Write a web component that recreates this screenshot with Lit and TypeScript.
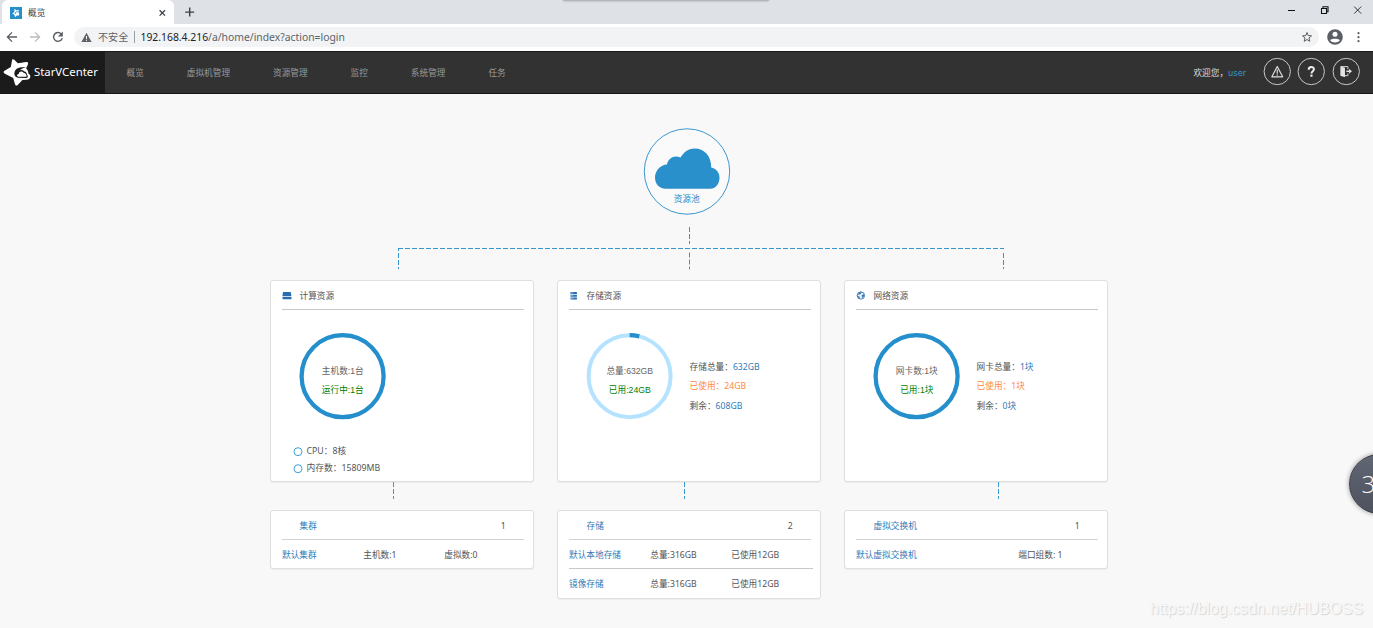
import { LitElement, html, svg, css, nothing } from "lit";
import { customElement, property } from "lit/decorators.js";

const BLUE = "#258fcc";

type Ring = { share: number; top: string; bottom: string };
type Fact = { label: string; value: string; tone?: string };
type Pool = {
  icon: unknown;
  title: string;
  ring: Ring;
  facts: Fact[];
  specs: string[];
  link: number;
  group: string;
  count: string;
  rows: string[][];
};

const hostIcon = svg`<path d="M1 .9h7.800l.6 4.400H.4z" fill="#2a6cae"/><path d="M.5 6.100h9v1.500a.6.6 0 0 1-.6.6H1.100a.6.6 0 0 1-.6-.6z" fill="#2a6cae"/>`;
const storeIcon = svg`<path d="M1.500 1h6.400v2.100H1.500zM1.500 3.700h6.400v2.100H1.500zM1.500 6.400h6.400v2.100H1.500z" fill="#2a6cae"/><path d="M2.300 2h1.200M2.300 4.700h1.200M2.300 7.400h1.200" stroke="#d5e6f6" stroke-width=".8"/><path d="M4.100 1v7.400" stroke="#8fb4da" stroke-width=".5"/>`;
const netIcon = svg`<circle cx="4.900" cy="4.500" r="3.700" fill="#e6eff8" stroke="#2a6cae" stroke-width=".8"/><path d="M1.300 4.800 3.600 6.100 3.400 7.600zM3.100 1.700 5.600 1.300 4.400 2.900 2.400 3.400zM6 4.600 7.300 3.200 8.100 4.800 6.600 6.800z" fill="#2a6cae" stroke="#2a6cae" stroke-width=".4"/>`;

const pools: Pool[] = [
  {
    icon: hostIcon,
    title: "计算资源",
    ring: { share: 1, top: "主机数:1台", bottom: "运行中:1台" },
    facts: [],
    specs: ["CPU：8核", "内存数：15809MB"],
    link: 123,
    group: "集群",
    count: "1",
    rows: [["默认集群", "主机数:1", "虚拟数:0"]],
  },
  {
    icon: storeIcon,
    title: "存储资源",
    ring: { share: 24 / 632, top: "总量:632GB", bottom: "已用:24GB" },
    facts: [
      { label: "存储总量：", value: "632GB" },
      { label: "已使用：", value: "24GB", tone: "warn" },
      { label: "剩余：", value: "608GB" },
    ],
    specs: [],
    link: 127,
    group: "存储",
    count: "2",
    rows: [
      ["默认本地存储", "总量:316GB", "已使用12GB"],
      ["镜像存储", "总量:316GB", "已使用12GB"],
    ],
  },
  {
    icon: netIcon,
    title: "网络资源",
    ring: { share: 1, top: "网卡数:1块", bottom: "已用:1块" },
    facts: [
      { label: "网卡总量：", value: "1块" },
      { label: "已使用：", value: "1块", tone: "warn" },
      { label: "剩余：", value: "0块" },
    ],
    specs: [],
    link: 154,
    group: "虚拟交换机",
    count: "1",
    rows: [["默认虚拟交换机", "", "端口组数: 1"]],
  },
];

@customElement("browser-chrome")
class BrowserChrome extends LitElement {
  static styles = css`
    :host { display: block; font-family: "Noto Sans", "Noto Sans CJK SC", sans-serif; }
    svg { display: block; flex: none; }
    .strip { position: relative; display: flex; height: 24px; background: #dee1e6; box-sizing: border-box; padding-left: 2px; }
    .tab { display: flex; align-items: center; width: 172px; height: 24px; border-radius: 6px 6px 0 0; background: #fff; box-sizing: border-box; padding: 1px 6px 0 8px; }
    .name { flex: 1; margin-left: 6px; font-size: 8.67px; line-height: 12px; color: #3c4043; }
    .plus { margin: 6px 0 0 10px; }
    .space { flex: 1; }
    .win { display: flex; margin-top: 4px; margin-right: 9.500px; gap: 21px; }
    .sheet { position: absolute; left: 563px; top: -6px; width: 206px; height: 7px; border-radius: 2px; background: #b3b5b9; box-shadow: 0 0 2px #8d8f93; }
    .bar { display: flex; align-items: center; height: 27px; background: #fff; box-sizing: border-box; padding: 0 8px 1px 5px; }
    .arrows { display: flex; gap: 9px; width: 69px; }
    .omni { display: flex; align-items: center; flex: 1; height: 20px; border-radius: 10px; background: #f1f3f4; padding: 0 6.500px 0 7px; }
    .unsafe { margin-left: 6px; font-size: 10.1px; line-height: 16px; color: #5f6368; width: 36px; }
    .sep { width: 1px; height: 12px; background: #9aa0a6; margin-right: 5.500px; }
    .url { flex: 1; font-size: 10.370px; line-height: 16px; color: #5f6368; white-space: nowrap; }
    .host { color: #202124; }
    .me { margin: 0 8px; }
  `;
  render() {
    return html`
      <div class="strip">
        <div class="sheet"></div>
        <div class="tab">
          <svg width="12" height="12" viewBox="0 0 12 12"><rect width="12" height="12" fill="#258fcc"/><path d="M4.500 1.800 6.300 3.200 9.200 3 8.200 4.600 9.300 7.200 9 8.500 6.800 8.600 5 10.200 4.500 7.900 2.200 6.300 4.300 5.200z" fill="#fff"/><path d="M7.800 4.700C5.800 4.500 5 5.500 5.200 7" stroke="#258fcc" stroke-width=".9" fill="none"/></svg>
          <div class="name">概览</div>
          <svg width="12" height="12" viewBox="0 0 12 12"><path d="M3.600 3.200l5.400 5.400M9 3.200L3.600 8.600" stroke="#3c4043" stroke-width="1.300"/></svg>
        </div>
        <svg class="plus" width="12" height="12" viewBox="0 0 12 12"><path d="M5.700 1.600v9M1.200 6.100h9" stroke="#3c4043" stroke-width="1.400"/></svg>
        <div class="space"></div>
        <div class="win">
          <svg width="12" height="12" viewBox="0 0 12 12"><path d="M2 6.500h7" stroke="#111"/></svg>
          <svg width="12" height="12" viewBox="0 0 12 12"><path d="M2.500 4.500h5v5h-5zM4 4V2.700h5v5H7.700" fill="none" stroke="#111" stroke-width="1.100"/></svg>
          <svg width="12" height="12" viewBox="0 0 12 12"><path d="M2.200 2.600l7 7M9.200 2.600l-7 7" stroke="#222" stroke-width=".9"/></svg>
        </div>
      </div>
      <div class="bar">
        <div class="arrows">
          <svg width="14" height="14" viewBox="0 0 14 14"><path d="M12 7H2.600M7 2.400 2.400 7 7 11.600" fill="none" stroke="#5a5e63" stroke-width="1.300"/></svg>
          <svg width="14" height="14" viewBox="0 0 14 14"><path d="M2 7h9.400M7 2.400 11.600 7 7 11.600" fill="none" stroke="#babcbe" stroke-width="1.300"/></svg>
          <svg width="14" height="14" viewBox="0 0 14 14"><path d="M11.200 8.200A4.400 4.400 0 1 1 10.200 3.900" fill="none" stroke="#5a5e63" stroke-width="1.400"/><path d="M11.800 1.600v4.900H6.900z" fill="#5a5e63"/></svg>
        </div>
        <div class="omni">
          <svg width="11" height="11" viewBox="0 0 11 11"><path d="M5.500.8 10.600 10H.4z" fill="#5f6368"/><path d="M5.500 4v3M5.500 7.800v1.100" stroke="#f1f3f4" stroke-width="1"/></svg>
          <div class="unsafe">不安全</div>
          <div class="sep"></div>
          <div class="url"><span class="host">192.168.4.216</span>/a/home/index?action=login</div>
          <svg width="12" height="12" viewBox="0 0 12 12"><path d="M6 1.500 7.250 4.600l3.300.25L8 7l.8 3.300L6 8.500l-2.800 1.800L4 7 1.500 4.850l3.300-.25z" fill="none" stroke="#5a5e63" stroke-width="1"/></svg>
        </div>
        <svg class="me" width="16" height="16" viewBox="0 0 16 16"><circle cx="8" cy="8" r="7.800" fill="#5a5e66"/><circle cx="8" cy="5.300" r="2.500" fill="#fff"/><path d="M3.200 11.300c.8-2 8.800-2 9.600 0-2 3-7.600 3-9.600 0z" fill="#fff"/></svg>
        <svg width="14" height="14" viewBox="0 0 14 14"><circle cx="7.500" cy="3.200" r="1.100" fill="#5a5e63"/><circle cx="7.500" cy="7.200" r="1.100" fill="#5a5e63"/><circle cx="7.500" cy="11.200" r="1.100" fill="#5a5e63"/></svg>
      </div>`;
  }
}

@customElement("top-nav")
class TopNav extends LitElement {
  static styles = css`
    :host { display: flex; height: 43px; box-sizing: border-box; background: #323232; border-top: 1px solid #1b1b1b; border-bottom: 1px solid #161616; font: 8.67px/14px "Noto Sans", "Noto Sans CJK SC", sans-serif; color: #999; }
    svg { display: block; flex: none; }
    .brand { display: flex; align-items: center; width: 105px; background: #1b1b1b; box-sizing: border-box; padding-left: 2px; color: #fff; font-size: 11.350px; }
    .word { margin-left: 3px; margin-top: -2px; }
    .menu { display: flex; flex: 1; align-items: center; gap: 42.950px; padding: 0 0 0 21.500px; }
    .hi { display: flex; align-items: center; color: #ddd; }
    .user { font-family: "DejaVu Sans", sans-serif; font-size: 8.300px; color: #3598db; }
    .tools { display: flex; align-items: center; gap: 6px; padding: 0 13px 2px 16.300px; }
  `;
  render() {
    const round = (body: unknown) => html`<svg width="28.500" height="29" viewBox="0 0 29 29"><circle cx="14.500" cy="14.500" r="13.400" fill="none" stroke="#c9c9c9" stroke-width="1"/>${body}</svg>`;
    return html`
      <div class="brand">
        <svg width="29" height="30" viewBox="0 0 29 30"><path d="M10.200 1.500c.7-.5 1.500-.4 2.100.2l3.500 3.500c2.300 0 5.300-1 8.700-1.200 1.700 0 2 1.400 1.300 2.700l-1.700 3.600c1.500 1.500 2.300 3.200 2.400 5.500 2.400.9 2.500 4.400.2 5.500-1.400.7-3.800.6-6.300.6l-4.700 5c-1 1.100-2.300.8-2.700-.6l-1.800-6.300-8.700-4.600c-1.200-.8-1.100-2.100.1-2.700l6.200-3.600z" fill="#fff"/><path d="M24 9.600c-4.600-.9-9.800 0-11.300 4-1.100 3.200.6 6 3.400 6.200l8.300.1c2-.3 1.700-2.800.5-3.200.1-2.200-1.200-3.500-2.600-3.300-2-2-4.200-1.700-5.200.2 1.500-2.300 3.600-3.600 6.900-4z" fill="#1b1b1b"/><path d="M16.500 18.800c-1.900-.2-1.900-2.700.2-2.800.4-2.900 4-3.200 5-.9 1.600-.3 2.400.9 2.200 1.900 1.300.3 1.100 1.800 0 1.800z" fill="#fff"/></svg>
        <div class="word">StarVCenter</div>
      </div>
      <div class="menu">${["概览", "虚拟机管理", "资源管理", "监控", "系统管理", "任务"].map((t) => html`<div>${t}</div>`)}</div>
      <div class="hi">欢迎您，<span class="user">user</span></div>
      <div class="tools">
        ${round(svg`<path d="M14.500 9.500 20 19.900H9z" fill="none" stroke="#ddd" stroke-width="1.200" stroke-linejoin="round"/><path d="M14.500 12.500v4.300M14.500 17.500v1.300" stroke="#ddd" stroke-width="1.200"/>`)}
        ${round(svg`<path d="M11.900 12.700c0-3.600 5.300-3.500 5.300-.5 0 2-2.500 1.900-2.500 4.300" fill="none" stroke="#eee" stroke-width="2"/><rect x="13.600" y="17.600" width="2.200" height="2.200" fill="#eee"/>`)}
        ${round(svg`<path d="M8.500 9.200 13.200 10.600V20.300L8.500 18.700z" fill="#e4e4e4"/><path d="M9 9.500h7.200v2.700M16.200 16.500v2.200h-3" fill="none" stroke="#d4d4d4" stroke-width="1"/><path d="M14.600 14.300h4" stroke="#e4e4e4" stroke-width="1.500"/><path d="M17.400 11.800 20.300 14.300 17.400 16.800z" fill="#e4e4e4"/>`)}
      </div>`;
  }
}

@customElement("pool-column")
class PoolColumn extends LitElement {
  @property({ attribute: false }) pool!: Pool;
  static styles = css`
    :host { display: block; width: 264px; font: 8.67px/14px "Noto Sans", "Noto Sans CJK SC", sans-serif; color: #555; }
    svg { display: block; flex: none; }
    .card { box-sizing: border-box; background: #fff; border: 1px solid #dfdfdf; border-radius: 3px; box-shadow: 0 1px 1px rgba(0, 0, 0, 0.05); padding: 0 9px 0 11px; }
    .main { height: 202px; display: flex; flex-direction: column; }
    .title { display: flex; align-items: center; width: 242px; height: 29px; box-sizing: border-box; padding-top: 1px; border-bottom: 1px solid #c8c8c8; gap: 7.500px; }
    .body { display: flex; height: 133px; }
    .ring { margin: 22px 0 0 17px; }
    .ring text { font-family: "Liberation Sans", "Noto Sans CJK SC", sans-serif; font-size: 8.67px; text-anchor: middle; }
    .facts { margin: 48px 0 0 15.600px; line-height: 19.300px; white-space: nowrap; }
    .value { color: #337ab7; }
    .warn, .warn .value { color: #ff8a42; }
    .specs { margin: 0 0 0 11px; line-height: 17.400px; font-size: 8.750px; }
    .spec { display: flex; align-items: center; gap: 3.500px; }
    .link { height: 28px; }
    .head { display: flex; justify-content: space-between; width: 242px; height: 29px; box-sizing: border-box; border-bottom: 1px solid #d2d2d2; padding: 8px 18.300px 0 17.500px; }
    .row { display: grid; grid-template-columns: 81.300px 81px 1fr; height: 28px; align-items: center; box-sizing: border-box; padding-top: 1px; }
    .row + .row { height: 30px; padding-top: 0; border-top: 1px solid #c8c8c8; margin-right: -2px; }
    .name { color: #337ab7; white-space: nowrap; }
  `;
  render() {
    const p = this.pool;
    const length = 2 * Math.PI * 41;
    return html`
      <div class="card main">
        <div class="title"><svg width="10" height="10" viewBox="0 0 10 10">${p.icon}</svg><div>${p.title}</div></div>
        <div class="body">
          <svg class="ring" width="88" height="88" viewBox="0 0 88 88">
            <circle cx="43.600" cy="44.200" r="41" fill="none" stroke="#b5e3ff" stroke-width="4"/>
            <circle cx="43.600" cy="44.200" r="41" fill="none" stroke=${BLUE} stroke-width="4.200" stroke-dasharray="${length * p.ring.share} ${length}" transform="rotate(-90 43.600 44.200)"/>
            <text x="43.800" y="42.300" fill="#666">${p.ring.top}</text>
            <text x="43.800" y="60.600" fill="#008000">${p.ring.bottom}</text>
          </svg>
          <div class="facts">${p.facts.map((f) => html`<div class=${f.tone ?? "plain"}>${f.label}<span class="value">${f.value}</span></div>`)}</div>
        </div>
        ${p.specs.length
          ? html`<div class="specs">${p.specs.map((s) => html`<div class="spec"><svg width="10" height="10" viewBox="0 0 10 10"><circle cx="5" cy="4.700" r="4" fill="none" stroke="#3f9fd4"/></svg>${s}</div>`)}</div>`
          : nothing}
      </div>
      <svg class="link" width="264" height="28"><path d="M${p.link + 0.5} 0v17" stroke="#3c9ad0" stroke-dasharray="5 2"/></svg>
      <div class="card">
        <div class="head"><div class="name">${p.group}</div><div>${p.count}</div></div>
        ${p.rows.map((r) => html`<div class="row"><div class="name">${r[0]}</div><div>${r[1]}</div><div>${r[2]}</div></div>`)}
      </div>`;
  }
}

@customElement("app-root")
class AppRoot extends LitElement {
  static styles = css`
    :host { display: block; position: relative; width: 1373px; height: 628px; overflow: hidden; background: #f8f8f8; font-family: "Noto Sans", "Noto Sans CJK SC", sans-serif; }
    svg { display: block; }
    .pool { margin: 34px 0 0 643px; }
    .pool text { font-size: 8.67px; text-anchor: middle; }
    .tree { margin: 10px 0 0 397px; }
    .columns { display: flex; align-items: flex-start; gap: 23px; margin: 9px 0 0 270px; }
    .bubble { position: absolute; left: 1349px; top: 454px; width: 60px; height: 60px; box-sizing: border-box; border-radius: 50%; border: 1px solid #3c4049; background: linear-gradient(#616675, #4e525e); box-shadow: 0 0 5px rgba(0, 0, 0, 0.4); color: #fff; font: 300 24px/57px "Open Sans", sans-serif; padding-left: 11.500px; }
    .mark { position: absolute; right: 10px; bottom: 9px; font: 15.850px/20px "Liberation Sans", sans-serif; color: #fafafa; text-shadow: 1px 1px 1px #d4d4d4, 0 0 1px #e8e8e8; }
  `;
  render() {
    return html`
      <browser-chrome></browser-chrome>
      <top-nav></top-nav>
      <svg class="pool" width="88" height="88" viewBox="0 0 88 88">
        <circle cx="44" cy="43.500" r="42.700" fill="#fafafa" stroke="#3a98cf" stroke-width="1"/>
        <path d="M22.500 60.500C16 60.500 12 55.500 12 49.300 12 42.500 17.500 36.500 24 36.300 25 30 31.500 26.300 37.500 29.300 41 23.500 46 20.300 51.700 20.300c9.300 0 16.600 7.200 16.500 18.900 4.800.8 8.300 5 8.300 10.300 0 5.500-3.500 11-9 11z" transform="translate(0 .3)" fill="#2a90cc"/>
        <text x="43.700" y="74" fill="#258fcc">资源池</text>
      </svg>
      <svg class="tree" width="608" height="45" fill="none" stroke="#3596cf">
        <path d="M1 22.500h606" stroke-dasharray="5 2"/>
        <path d="M292.500 1v17M292.500 26.500v17" stroke-dasharray="5 2"/>
        <path d="M1.500 22.500v2.500M1.500 27v16M606.500 27v16" stroke-dasharray="5 2"/>
      </svg>
      <div class="columns">${pools.map((p) => html`<pool-column .pool=${p}></pool-column>`)}</div>
      <div class="bubble">3</div>
      <div class="mark">https://blog.csdn.net/HUBOSS</div>`;
  }
}
